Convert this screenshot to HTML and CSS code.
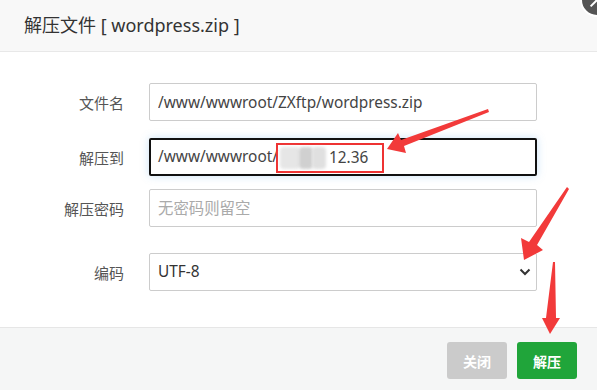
FILE: index.html
```html
<!DOCTYPE html>
<html>
<head>
	<meta charset="utf-8">
	<title>解压文件</title>
	<link rel="stylesheet" href="styles.css">
</head>
<body>
	<div class="layer">
		<!--- title bar --->
		<div class="layer-title">解压文件 [ wordpress.zip ]</div>
		<span class="layer-close"></span>
		<!--- form --->
		<div class="layer-content">
			<div class="line row1">
				<span class="tname">文件名</span>
				<div class="info"><input class="bt-input" type="text" value="/www/wwwroot/ZXftp/wordpress.zip"></div>
			</div>
			<div class="line row2">
				<span class="tname">解压到</span>
				<div class="info">
					<div class="bt-input focus">/www/wwwroot/<span class="mark"><span class="hidden"><span class="blur b1"></span><span class="blur b2"></span><span class="blur b3"></span></span>12.36</span></div>
				</div>
			</div>
			<div class="line row3">
				<span class="tname">解压密码</span>
				<div class="info"><input class="bt-input" type="text" placeholder="无密码则留空"></div>
			</div>
			<div class="line row4">
				<span class="tname">编码</span>
				<div class="info">
					<div class="bt-input select">UTF-8
						<svg class="chev" width="12" height="8" viewBox="0 0 12 8"><path d="M1.5 1.5 L6 6 L10.5 1.5" fill="none" stroke="#333" stroke-width="2"/></svg>
					</div>
				</div>
			</div>
		</div>
		<!--- buttons --->
		<div class="layer-btn">
			<button class="btn btn-close">关闭</button>
			<button class="btn btn-ok">解压</button>
		</div>
		<!--- red annotation arrows drawn over the dialog --->
		<svg class="arrows" width="597" height="390" viewBox="0 0 597 390">
			<path d="M488 109 L489 112 L404 146 L406 153 L387 149 L398 133 L401 140 Z" fill="#f23a3a"/>
			<path d="M567 187 L569 189 L537 245 L543 250 L524 260 L521 238 L529 242 Z" fill="#f23a3a"/>
			<path d="M553 262 L555 262 L556 318 L560 318 L550 334 L542 318 L546 318 Z" fill="#f23a3a"/>
		</svg>
	</div>
</body>
</html>
```

FILE: styles.css
```css
	/* page reset, the dialog fills the whole window */
	body {
		margin: 0;
		font-family: "Noto Sans", "Noto Sans CJK SC", sans-serif;
		color: #333;
	}
	.layer {
		position: relative;
		width: 597px;
		height: 390px;
		overflow: hidden;
		background-color: white;
	}
	/* title bar */
	.layer-title {
		height: 51px;
		line-height: 51px;
		padding-left: 24px;
		font-size: 18px;
		color: #333;
		background-color: #f8f8f8;
		border-bottom: 1px solid #e8e8e8;
	}
	/* round close button, mostly outside the window */
	.layer-close {
		position: absolute;
		top: -17px;
		right: -17px;
		width: 30px;
		height: 30px;
		border-radius: 50%;
		background-color: #555;
		border: 2px solid white;
	}
	.layer-close::before,
	.layer-close::after {
		content: "";
		position: absolute;
		left: 6px;
		top: 14px;
		width: 18px;
		height: 2px;
		background-color: white;
	}
	.layer-close::before {
		transform: rotate(45deg);
	}
	.layer-close::after {
		transform: rotate(-45deg);
	}
	/* form rows */
	.layer-content {
		height: 244px;
		padding-top: 31px;
	}
	.line {
		display: flex;
		align-items: center;
	}
	.row2 {
		margin-top: 17px;
	}
	.row3 {
		margin-top: 13px;
	}
	.row4 {
		margin-top: 26px;
	}
	.tname {
		width: 100px;
		padding-left: 24px;
		padding-right: 25px;
		text-align: right;
		font-size: 15px;
		color: #555;
	}
	.bt-input {
		box-sizing: border-box;
		width: 388px;
		height: 38px;
		padding: 0 8px;
		border: 1px solid #ccc;
		border-radius: 2px;
		font-family: "Noto Sans", "Noto Sans CJK SC", sans-serif;
		font-size: 15.4px;
		color: #444;
		line-height: 36px;
		outline: none;
	}
	.bt-input::placeholder {
		color: #aaa;
	}
	/* focused path field */
	.focus {
		border: 2px solid #111;
		line-height: 34px;
		padding-left: 7px;
		box-shadow: 0 0 8px rgba(102, 175, 233, 0.35);
		white-space: nowrap;
	}
	/* red box round the hidden part of the path and the last numbers */
	.mark {
		display: inline-block;
		vertical-align: top;
		position: relative;
		top: 3px;
		box-sizing: border-box;
		width: 108px;
		height: 30px;
		line-height: 26px;
		border: 2px solid #ee3333;
		margin-left: -2px;
	}
	.hidden {
		display: inline-block;
		vertical-align: top;
		position: relative;
		width: 51px;
		height: 26px;
	}
	.blur {
		position: absolute;
		top: 2px;
		height: 22px;
		border-radius: 4px;
		filter: blur(1.5px);
	}
	.b1 {
		left: 2px;
		width: 20px;
		background-color: #e6e6e6;
	}
	.b2 {
		left: 21px;
		width: 14px;
		background-color: #d0d0d0;
	}
	.b3 {
		left: 34px;
		width: 14px;
		background-color: #e0e0e0;
	}
	/* encoding select */
	.select {
		position: relative;
		color: #333;
	}
	.chev {
		position: absolute;
		right: 5px;
		top: 14px;
	}
	/* footer buttons */
	.layer-btn {
		display: flex;
		justify-content: flex-end;
		gap: 10px;
		height: 49px;
		padding: 14px 20px 0 0;
		background-color: #f5f6f6;
		border-top: 1px solid #e6e6e6;
	}
	.btn {
		width: 60px;
		height: 37px;
		border: none;
		border-radius: 3px;
		color: white;
		font-family: "Noto Sans CJK SC", sans-serif;
		font-size: 14px;
		font-weight: bold;
	}
	.btn-close {
		background-color: #cbcbcb;
	}
	.btn-ok {
		background-color: #20a53a;
	}
	/* annotation overlay */
	.arrows {
		position: absolute;
		left: 0;
		top: 0;
		pointer-events: none;
	}
```
